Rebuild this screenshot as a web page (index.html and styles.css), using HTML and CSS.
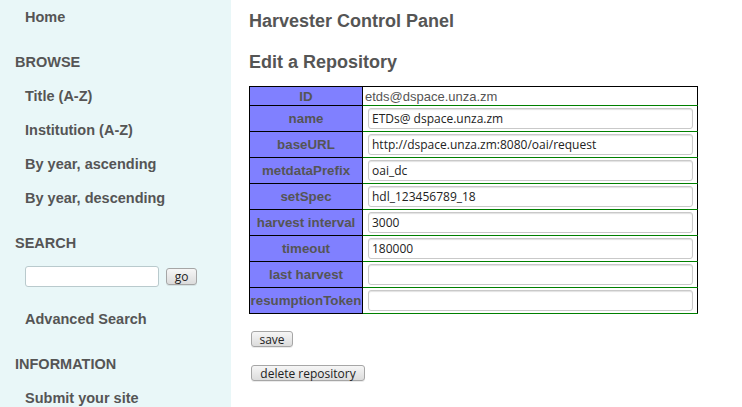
FILE: index.html
```html
<!DOCTYPE html>
<html>
<head>
<meta charset="utf-8">
<title>Harvester Control Panel</title>
<link rel="stylesheet" href="styles.css">
</head>
<body>
<div class="page">
  <nav class="sidebar">
    <a class="link" href="#">Home</a>
    <h3 class="section">BROWSE</h3>
    <a class="link" href="#">Title (A-Z)</a>
    <a class="link" href="#">Institution (A-Z)</a>
    <a class="link" href="#">By year, ascending</a>
    <a class="link" href="#">By year, descending</a>
    <h3 class="section">SEARCH</h3>
    <form class="search">
      <input class="search-input" type="text">
      <button class="btn btn-go" type="button">go</button>
    </form>
    <a class="link" href="#">Advanced Search</a>
    <h3 class="section">INFORMATION</h3>
    <a class="link" href="#">Submit your site</a>
  </nav>
  <main class="main">
    <h1 class="title">Harvester Control Panel</h1>
    <h2 class="subtitle">Edit a Repository</h2>
    <table class="repo">
      <tr class="id-row"><th>ID</th><td class="id-cell">etds@dspace.unza.zm</td></tr>
      <tr><th>name</th><td><input class="field" type="text" value="ETDs@ dspace.unza.zm"></td></tr>
      <tr><th>baseURL</th><td><input class="field" type="text" value="http://dspace.unza.zm:8080/oai/request"></td></tr>
      <tr><th>metdataPrefix</th><td><input class="field" type="text" value="oai_dc"></td></tr>
      <tr><th>setSpec</th><td><input class="field" type="text" value="hdl_123456789_18"></td></tr>
      <tr><th>harvest interval</th><td><input class="field" type="text" value="3000"></td></tr>
      <tr><th>timeout</th><td><input class="field" type="text" value="180000"></td></tr>
      <tr><th>last harvest</th><td><input class="field" type="text" value=""></td></tr>
      <tr><th>resumptionToken</th><td><input class="field" type="text" value=""></td></tr>
    </table>
    <div class="actions">
      <button class="btn btn-save" type="button">save</button>
      <button class="btn btn-delete" type="button">delete repository</button>
    </div>
  </main>
</div>
</body>
</html>
```

FILE: styles.css
```css
html, body {
  margin: 0;
  padding: 0;
  background: #ffffff;
  height: 100%;
  overflow: hidden;
}
body {
  font-family: "Liberation Sans", Arial, sans-serif;
  color: #555555;
}
.page {
  display: flex;
  min-height: 407px;
}
.sidebar {
  width: 231px;
  flex: none;
  background: #e9f7f8;
  display: flex;
  flex-direction: column;
}
.link {
  display: block;
  height: 34px;
  line-height: 34px;
  padding-left: 25px;
  font-size: 14.5px;
  font-weight: bold;
  color: #555555;
  text-decoration: none;
  white-space: nowrap;
}
.section {
  margin: 11px 0 0;
  height: 34px;
  line-height: 34px;
  padding-left: 15px;
  font-size: 14.5px;
  font-weight: bold;
  color: #555555;
}
.search {
  display: flex;
  align-items: center;
  gap: 7px;
  margin: 0;
  padding: 6px 0 16px 25px;
  height: 20px;
}
.search-input {
  box-sizing: border-box;
  width: 134px;
  height: 21px;
  margin: 0;
  border: 1px solid #b9cacd;
  border-radius: 3px;
  background: #ffffff;
}
.btn {
  box-sizing: border-box;
  height: 16px;
  margin: 0;
  padding: 0;
  border: 1px solid #a6a6a6;
  border-radius: 3px;
  background: linear-gradient(#f6f6f6, #dcdcdc);
  font-family: "Open Sans", "DejaVu Sans", sans-serif;
  font-size: 12px;
  line-height: 13px;
  color: #222222;
  text-align: center;
  box-shadow: 0 1px 0 rgba(0,0,0,0.08);
}
.btn-go {
  width: 31px;
  height: 17px;
}
.main {
  padding: 11px 0 0 18px;
  flex: 1;
}
.title {
  margin: 0;
  font-size: 18px;
  line-height: 20px;
  font-weight: bold;
  color: #555555;
}
.subtitle {
  margin: 21px 0 14px;
  font-size: 18px;
  line-height: 20px;
  font-weight: bold;
  color: #555555;
}
.repo {
  border-collapse: collapse;
  border: 1px solid #000000;
  width: 449px;
}
.repo th {
  width: 112px;
  padding: 0;
  border: 1px solid #000000;
  background: #8080ff;
  color: #555555;
  font-size: 13.33px;
  font-weight: bold;
  text-align: center;
  white-space: nowrap;
}
.repo td {
  padding: 0 4px 0 5px;
  border-bottom: 1px solid #008000;
  border-right: 1px solid #000000;
}
.id-row th, .id-row td {
  height: 18px;
}
.repo td.id-cell {
  padding-left: 2px;
  font-size: 13px;
  color: #555555;
}
.field {
  display: block;
  box-sizing: border-box;
  width: 100%;
  height: 21px;
  margin: 2px 0;
  padding: 0 3px;
  border: 1px solid #c9c9c9;
  border-radius: 3px;
  box-shadow: inset 0 1px 1px rgba(0,0,0,0.12);
  background: #ffffff;
  font-family: "Open Sans", "DejaVu Sans", sans-serif;
  font-size: 12px;
  color: #222222;
}
.actions {
  display: flex;
  flex-direction: column;
  align-items: flex-start;
  gap: 18px;
  padding: 17px 0 0 2px;
}
.btn-save {
  width: 42px;
}
.btn-delete {
  width: 114px;
}
```
